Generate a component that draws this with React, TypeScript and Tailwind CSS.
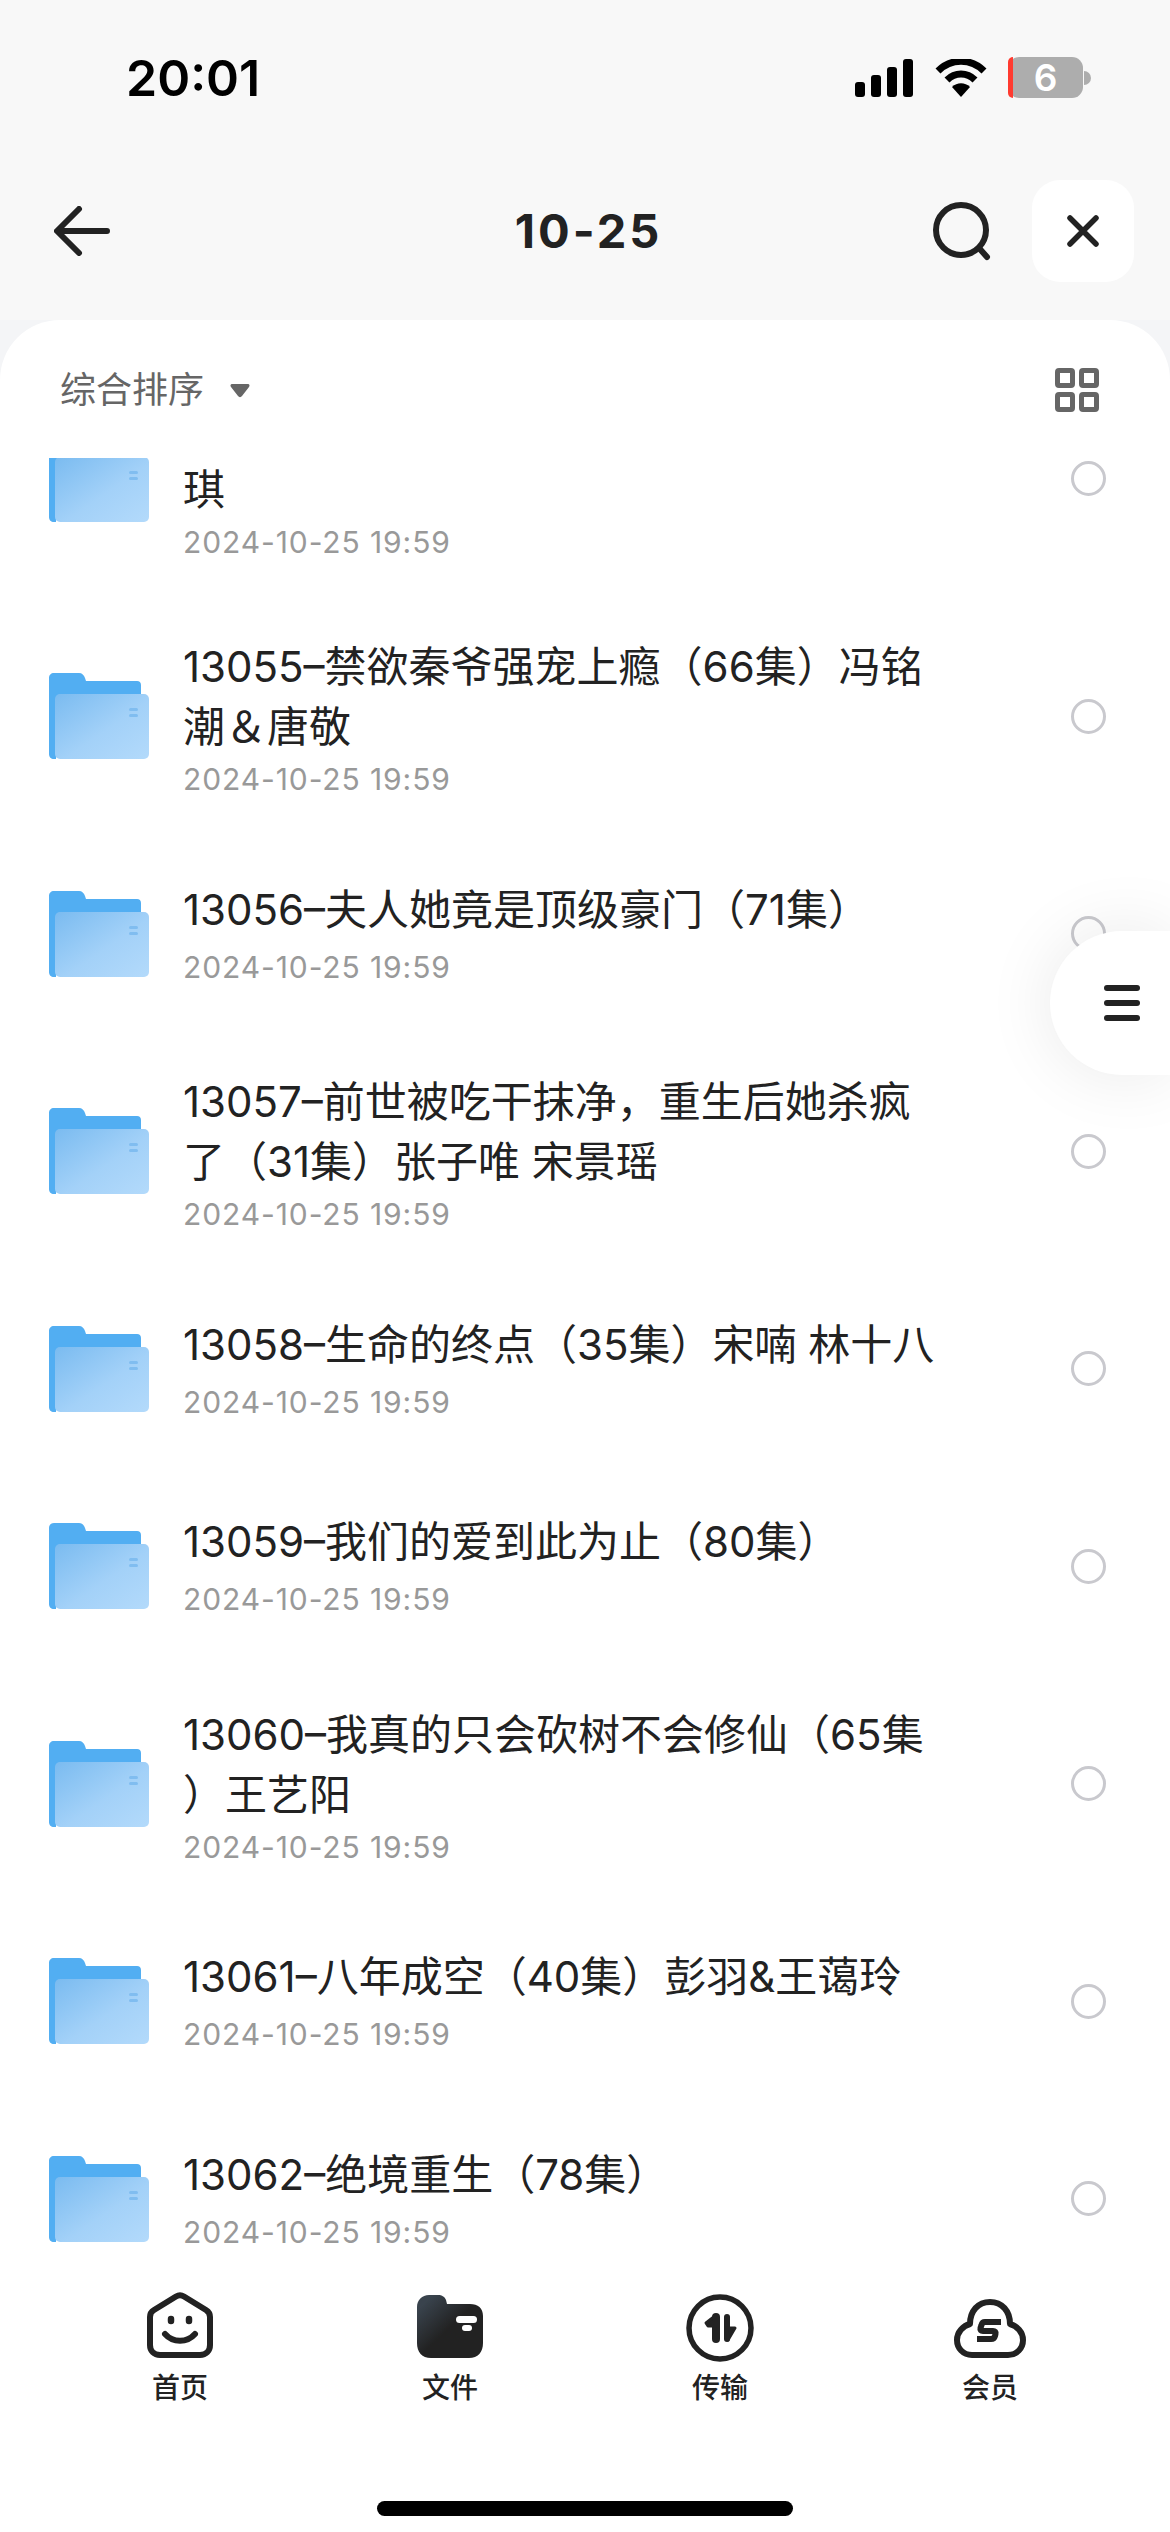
import React from "react";

const FONT = "[font-family:Inter,'Noto_Sans_CJK_SC',sans-serif]";

type Row = { lines: string[] };
const rows: Row[] = [
  { lines: ["", "琪"] },
  { lines: ["13055–禁欲秦爷强宠上瘾（66集）冯铭", "潮＆唐敬"] },
  { lines: ["13056–夫人她竟是顶级豪门（71集）"] },
  { lines: ["13057–前世被吃干抹净，重生后她杀疯", "了（31集）张子唯 宋景瑶"] },
  { lines: ["13058–生命的终点（35集）宋喃 林十八"] },
  { lines: ["13059–我们的爱到此为止（80集）"] },
  { lines: ["13060–我真的只会砍树不会修仙（65集", "）王艺阳"] },
  { lines: ["13061–八年成空（40集）彭羽&王蔼玲"] },
  { lines: ["13062–绝境重生（78集）"] },
];

function Folder() {
  return (
    <svg width="100" height="86" viewBox="0 0 100 86" className="shrink-0">
      <defs>
        <linearGradient id="fg" x1="0" y1="0" x2="1" y2="1">
          <stop offset="0" stopColor="#7abbf0" />
          <stop offset="0.55" stopColor="#a3d1f8" />
          <stop offset="1" stopColor="#b3dafb" />
        </linearGradient>
      </defs>
      <path d="M5 0H30C33 0 35 2 36 5L37 8H88C90.500 8 92 9.500 92 12V70H7V86H5C2 86 0 84 0 81V5C0 2 2 0 5 0Z" fill="#52aef2" />
      <rect x="6" y="21" width="94" height="65" rx="5" fill="url(#fg)" />
      <rect x="80" y="35" width="9" height="3" rx="1.500" fill="#80bdf0" />
      <rect x="80" y="41" width="9" height="3" rx="1.500" fill="#80bdf0" />
    </svg>
  );
}

function ListRow({ row }: { row: Row }) {
  const tall = row.lines.length > 1;
  return (
    <div className={`flex items-center pl-[49px] pr-[64px] shrink-0 ${tall ? "h-[237.5px]" : "h-[197.5px]"} ${row.lines[0] === "" ? "mt-[-98px]" : ""}`}>
      <Folder />
      <div className={`ml-[34px] flex-1 min-w-0 ${tall ? "pt-[5px]" : ""}`}>
        {row.lines.map((l, i) => (
          <div key={i} className="h-[60px] leading-[60px] text-[42px] text-[#222222] whitespace-nowrap">
            {l}
          </div>
        ))}
        <div className={`h-[42px] leading-[42px] text-[30px] tracking-[0.9px] text-[#999999] ${tall ? "mt-[1px]" : "mt-[6px]"}`}>2024-10-25 19:59</div>
      </div>
      <div className="w-[35px] h-[35px] rounded-full border-[3px] border-[#c9c9ce] shrink-0" />
    </div>
  );
}

function StatusIcons() {
  return (
    <div className="flex items-center">
      <svg width="58" height="38" viewBox="0 0 58 38">
        <rect x="0" y="23" width="10" height="15" rx="3" fill="#000" />
        <rect x="16" y="16" width="10" height="22" rx="3" fill="#000" />
        <rect x="32" y="8" width="10" height="30" rx="3" fill="#000" />
        <rect x="48" y="0" width="10" height="38" rx="3" fill="#000" />
      </svg>
      <svg width="52" height="38" viewBox="0 0 52 38" className="ml-[22px]">
        <path d="M3 12C16 -1 36 -1 49 12" fill="none" stroke="#000" strokeWidth="7" />
        <path d="M12 21C20 13 32 13 40 21" fill="none" stroke="#000" strokeWidth="7" />
        <path d="M17 28C22 23 30 23 35 28L26 38Z" fill="#000" />
      </svg>
      <div className="ml-[21px] w-[75px] h-[41px] rounded-[11px] bg-[#adadad] flex">
        <div className="w-[5px] h-full bg-[#ff3b30] rounded-l-[11px]" />
        <div className="flex-1 text-center pr-[5px] text-white font-semibold text-[37px] leading-[41px]">6</div>
      </div>
      <div className="w-[7px] h-[14px] bg-[#adadad] rounded-r-full ml-[1px]" />
    </div>
  );
}

function HomeIcon() {
  return (
    <svg width="66" height="66" viewBox="0 0 66 66" fill="none" stroke="#222" strokeWidth="6" strokeLinecap="round" strokeLinejoin="round">
      <path d="M29 4.500C31.500 3 34.500 3 37 4.500L59 18C61.500 19.500 63 22 63 25V53C63 59 59 63 53 63H13C7 63 3 59 3 53V25C3 22 4.500 19.500 7 18Z" />
      <path d="M24 27V29M42 27V29" strokeWidth="6.500" />
      <path d="M18 42C26 51 40 51 48 42" strokeWidth="6" />
    </svg>
  );
}

function FileIcon() {
  return (
    <svg width="66" height="63" viewBox="0 0 66 63">
      <defs>
        <linearGradient id="dk" x1="0.05" y1="0.05" x2="0.75" y2="0.75">
          <stop offset="0.1" stopColor="#39434d" />
          <stop offset="0.65" stopColor="#222222" />
        </linearGradient>
      </defs>
      <path d="M12 0H21C25 0 28 2 29 5L30 9H53C61 9 66 13 66 21V48C66 57 61 63 52 63H14C5 63 0 57 0 48V12C0 5 5 0 12 0Z" fill="url(#dk)" />
      <rect x="39" y="21" width="21" height="7" rx="3.500" fill="#fff" />
      <rect x="45" y="30" width="10" height="6" rx="3" fill="#fff" />
    </svg>
  );
}

function TransferIcon() {
  return (
    <svg width="68" height="68" viewBox="0 0 68 68" fill="none" stroke="#222" strokeLinecap="round" strokeLinejoin="round" className="mb-[-4px]">
      <circle cx="34" cy="34" r="31" strokeWidth="5.500" />
      <path d="M30 23V45" strokeWidth="8" />
      <path d="M29 22L20 29L22 32H29Z" strokeWidth="3" fill="#222" />
      <path d="M41 23V45" strokeWidth="6" />
      <path d="M41 34H49L42 46Z" strokeWidth="3" fill="#222" />
    </svg>
  );
}

function VipIcon() {
  return (
    <svg width="72" height="59" viewBox="0 0 72 59" fill="none" stroke="#222" strokeLinejoin="round">
      <path d="M18 56C9 56 3 49 3 41C3 33 9 27 16 25C16 12 24 3 36 3C48 3 56 12 56 25C63 27 69 33 69 41C69 49 63 56 54 56Z" strokeWidth="6" />
      <path d="M47 23H31C29 23 28 24 27.500 26L26.500 29C26 31 27 32 29 32H39C41 32 42 33 41.500 35L41 37C40.500 39 39 40 37 40H23" strokeWidth="6" />
    </svg>
  );
}

function Tab({ icon, label }: { icon: React.ReactNode; label: string }) {
  return (
    <div className="w-[270px] flex flex-col items-center">
      <div className="h-[72px] flex items-end justify-center">{icon}</div>
      <div className="text-[28px] leading-[40px] mt-[10px] text-[#222222] font-medium">{label}</div>
    </div>
  );
}

export default function App() {
  return (
    <div className={`relative w-[1170px] h-[2532px] overflow-hidden bg-[#f4f5f7] flex flex-col ${FONT}`}>
      <div className="bg-[#f8f8f8] h-[320px] shrink-0 flex flex-col">
        <div className="h-[156px] pl-[126px] pr-[79px] flex items-start justify-between pt-[50px]">
          <div className="text-[50px] leading-[56px] font-semibold text-black">20:01</div>
          <div className="pt-[7px]"><StatusIcons /></div>
        </div>
        <div className="flex items-center pl-[54px] pr-[36px] h-[102px] mt-[24px]">
          <svg width="56" height="50" viewBox="0 0 56 50" fill="none" stroke="#222" strokeWidth="6" strokeLinecap="round" strokeLinejoin="round">
            <path d="M25 3L3 25L25 47M4 25H53" />
          </svg>
          <div className="flex-1 text-center text-[47px] font-bold tracking-[3px] text-[#222222] pl-[135px]">10-25</div>
          <svg width="60" height="60" viewBox="0 0 60 60" fill="none" stroke="#222" strokeWidth="6" strokeLinecap="round">
            <circle cx="29" cy="29" r="25" />
            <path d="M47 47L55 56" />
          </svg>
          <div className="ml-[40px] w-[102px] h-[102px] rounded-[28px] bg-white flex items-center justify-center">
            <svg width="32" height="32" viewBox="0 0 32 32" fill="none" stroke="#222" strokeWidth="5.500" strokeLinecap="round">
              <path d="M3 3L29 29M29 3L3 29" />
            </svg>
          </div>
        </div>
      </div>

      <div className="flex-1 bg-white rounded-t-[60px] flex flex-col min-h-0">
        <div className="h-[138px] shrink-0 flex items-center pl-[60px] pr-[71px] justify-between pt-[2px]">
          <div className="flex items-center">
            <span className="text-[36px] text-[#666666]">综合排序</span>
            <svg width="20" height="15" viewBox="0 0 20 15" className="ml-[26px]">
              <path d="M2 1H18C19.500 1 20 2.500 19 4L12 13C11 14.500 9 14.500 8 13L1 4C0 2.500 0.500 1 2 1Z" fill="#666" />
            </svg>
          </div>
          <svg width="44" height="44" viewBox="0 0 44 44" fill="none" stroke="#666" strokeWidth="5">
            <rect x="2.500" y="2.500" width="15" height="15" rx="1.500" />
            <rect x="26.500" y="2.500" width="15" height="15" rx="1.500" />
            <rect x="2.500" y="26.500" width="15" height="15" rx="1.500" />
            <rect x="26.500" y="26.500" width="15" height="15" rx="1.500" />
          </svg>
        </div>
        <div className="flex-1 min-h-0 overflow-hidden flex flex-col">
          {rows.map((r, i) => (
            <ListRow key={i} row={r} />
          ))}
        </div>
        <div className="h-[282px] shrink-0 bg-white flex flex-col">
          <div className="flex px-[45px] pt-[36px]">
            <Tab icon={<HomeIcon />} label="首页" />
            <Tab icon={<FileIcon />} label="文件" />
            <Tab icon={<TransferIcon />} label="传输" />
            <Tab icon={<VipIcon />} label="会员" />
          </div>
          <div className="mt-[93px] w-[416px] h-[15px] rounded-full bg-black ml-[377px]" />
        </div>
      </div>

      <div className="absolute right-0 top-[931px] w-[120px] h-[144px] bg-white rounded-l-[72px] shadow-[0_0_70px_rgba(0,0,0,0.09)] flex items-center pl-[54px]">
        <div className="flex flex-col gap-[9px]">
          <div className="w-[36px] h-[6px] rounded-full bg-[#222222]" />
          <div className="w-[36px] h-[6px] rounded-full bg-[#222222]" />
          <div className="w-[36px] h-[6px] rounded-full bg-[#222222]" />
        </div>
      </div>
    </div>
  );
}
